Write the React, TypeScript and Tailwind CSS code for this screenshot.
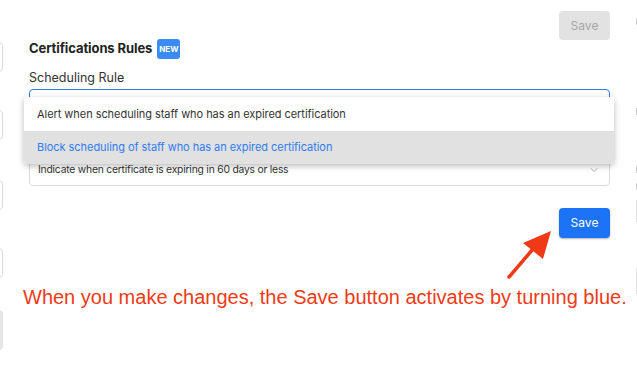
import { ChevronDown } from "lucide-react";

const ui = "font-['Inter','Noto_Sans',sans-serif]";

function EdgeBox({ className = "" }: { className?: string }) {
  return <div className={`w-[14px] -ml-[11px] rounded-[4px] border border-[#dcdcdc] ${className}`} />;
}

export default function App() {
  return (
    <div className={`relative flex h-[372px] w-[637px] overflow-hidden bg-white ${ui}`}>
      {/* cut-off column on the left */}
      <div className="flex w-[4px] shrink-0 flex-col">
        <EdgeBox className="mt-[42px] h-[30px]" />
        <EdgeBox className="mt-[38px] h-[30px]" />
        <EdgeBox className="mt-[40px] h-[30px]" />
        <EdgeBox className="mt-[38px] h-[30px]" />
        <div className="-ml-[11px] mt-[32px] h-[40px] w-[14px] rounded-[4px] bg-[#e6e6e6]" />
      </div>

      {/* main panel */}
      <div className="ml-[25px] flex w-[581px] shrink-0 flex-col">
        <div className="flex justify-end pt-[11px]">
          <button className="h-[29px] w-[51px] rounded-[4px] bg-[#e2e2e2] text-[12px] text-[#a6a6a6]">Save</button>
        </div>

        <div className="-mt-px flex h-[20px] items-center gap-[5px]">
          <span className="text-[13px] font-bold tracking-[-0.1px] text-[#222]">Certifications Rules</span>
          <span className="flex h-[20px] items-center rounded-[3px] bg-[#3a8bf6] px-[2px] text-[8px] font-bold text-white">NEW</span>
        </div>

        <div className="mt-[11px] text-[12.5px] leading-[16px] text-[#333]">Scheduling Rule</div>

        <div className="relative mt-[3px]">
          <div className="h-[34px] rounded-[4px] border border-[#2f7ae5]" />
          <div className="absolute left-[-5px] right-[-4px] top-[8px] z-10 overflow-hidden rounded-[4px] bg-white shadow-[0_2px_6px_rgba(0,0,0,0.28)]">
            <div className="flex h-[34px] items-center px-[13px] text-[11px] tracking-[-0.05px] text-[#333]">
              Alert when scheduling staff who has an expired certification
            </div>
            <div className="flex h-[33px] items-center bg-[#e1e1e1] px-[13px] text-[11px] tracking-[-0.05px] text-[#2e7cf6]">
              Block scheduling of staff who has an expired certification
            </div>
          </div>
        </div>

        {/* label of the second select sits under the open menu */}
        <div className="h-[30px]" />

        <div className="flex h-[33px] items-center justify-between rounded-[4px] border border-[#dcdcdc] pl-[8px] pr-[9px]">
          <span className="text-[10.3px] tracking-[-0.2px] text-[#333]">Indicate when certificate is expiring in 60 days or less</span>
          <ChevronDown size={12} strokeWidth={1.6} className="text-[#999]" />
        </div>

        <div className="mt-[22px] flex justify-end">
          <button className="h-[30px] w-[51px] rounded-[4px] bg-[#1d73f5] text-[12px] text-white shadow-[0_1px_2px_rgba(0,0,0,0.3)]">
            Save
          </button>
        </div>
      </div>

      {/* cut-off column on the right */}
      <div className="ml-[26px] flex flex-col">
        <div className="mt-[18px] h-[7px] w-px bg-[#cfcfcf]" />
        <div className="mt-[83px] h-[7px] w-px bg-[#cfcfcf]" />
        <div className="mt-[51px] h-[7px] w-px bg-[#cfcfcf]" />
        <div className="mt-[10px] h-[7px] w-px bg-[#cfcfcf]" />
        <div className="mt-[10px] h-[22px] w-px bg-[#e4e4e4]" />
        <div className="mt-[46px] h-[26px] w-px bg-[#e4e4e4]" />
      </div>

      {/* annotation */}
      <svg className="absolute left-[500px] top-[215px]" width="60" height="70" viewBox="0 0 60 70">
        <line x1="9" y1="62" x2="33" y2="34" stroke="#f03a17" strokeWidth="3.5" strokeLinecap="round" />
        <polygon points="51,16 23,28 43,44" fill="#f03a17" />
      </svg>
      <p className="absolute left-[23px] top-[285px] font-['Liberation_Sans',Arial,sans-serif] text-[20px] leading-[24px] text-[#f03a17]">
        When you make changes, the Save button activates by turning blue.
      </p>
    </div>
  );
}
